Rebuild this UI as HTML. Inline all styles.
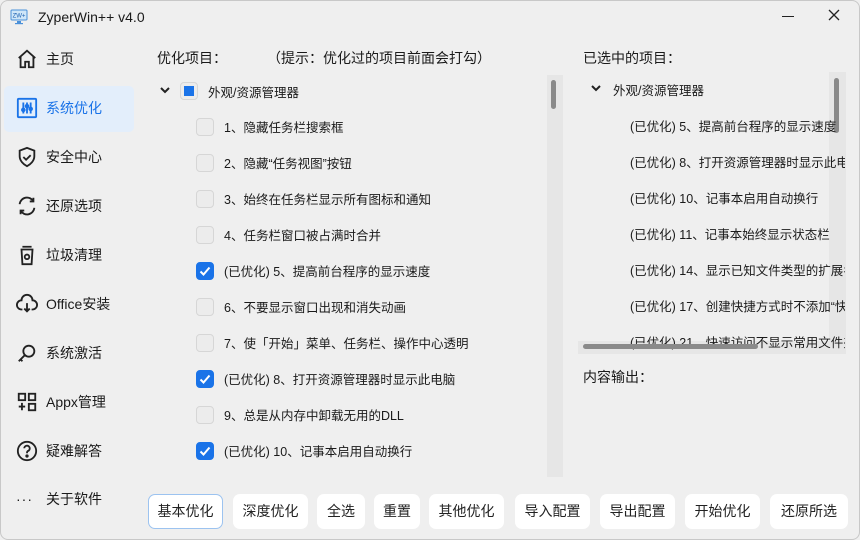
<!DOCTYPE html>
<html><head><meta charset="utf-8"><style>
*{margin:0;padding:0;box-sizing:border-box}
body{width:860px;height:540px;background:#efefef;font-family:"Liberation Sans","Noto Sans CJK SC",sans-serif;color:#1a1a1a;position:relative;overflow:hidden;font-size:13px}
.a{position:absolute;white-space:nowrap}
.nav{position:absolute;left:16px;font-size:14px;display:flex;align-items:center}
.nav svg{width:22px;height:22px;margin-right:8px}
.sel{position:absolute;left:4px;top:86px;width:130px;height:46px;background:#e3eefb;border-radius:5px}
.cb{position:absolute;left:196px;width:18px;height:18px;border:1px solid #d6d6d6;border-radius:4px;background:#ececec}
.cb.on{background:#1a73e8;border-color:#1a73e8}
.it{position:absolute;left:224px;font-size:12.5px}
.rt{position:absolute;left:630px;font-size:12.5px;white-space:nowrap;width:215px;overflow:hidden}
.btn{position:absolute;top:494px;height:35px;background:#fff;border-radius:7px;font-size:14px;text-align:center;line-height:35px;color:#222}
.frame{position:absolute;left:0;top:0;width:860px;height:540px;border:1px solid #c8c8c8;border-radius:8px;pointer-events:none}
</style></head><body>
<svg class="a" style="left:10px;top:9px" width="18" height="16" viewBox="0 0 18 16"><rect x="1" y="1" width="16" height="10" rx="1" fill="#cfe6f8" stroke="#4a90d9"/><text x="9" y="8.5" font-size="6" text-anchor="middle" fill="#1a5fb0" font-family="Liberation Sans">ZW+</text><rect x="7" y="12" width="4" height="2" fill="#4a90d9"/><rect x="5" y="14" width="8" height="1.2" fill="#4a90d9"/></svg>
<div class="a" style="left:38px;top:9px;font-size:14px">ZyperWin++ v4.0</div>
<div class="a" style="left:782px;top:16px;width:12px;height:1px;background:#222"></div>
<svg class="a" style="left:828px;top:9px" width="12" height="12"><path d="M1 1l10 10M11 1L1 11" stroke="#222" stroke-width="1.3"/></svg>
<div class="sel"></div>
<div class="nav" style="top:48px"><svg viewBox="0 0 24 24" fill="none" stroke="#222" stroke-width="2"><path d="M3 11L12 3l9 8M5 9v12h5v-6h4v6h5V9"/></svg>主页</div>
<div class="nav" style="top:97px;color:#1a73e8"><svg viewBox="0 0 24 24" fill="none" stroke="#1a73e8" stroke-width="2"><rect x="2" y="2" width="20" height="20" rx="1"/><path d="M8 6v12M12 6v12M16 6v12"/><circle cx="8" cy="14" r="1.5" fill="#1a73e8"/><circle cx="12" cy="10" r="1.5" fill="#1a73e8"/><circle cx="16" cy="13" r="1.5" fill="#1a73e8"/></svg>系统优化</div>
<div class="nav" style="top:146px"><svg viewBox="0 0 24 24" fill="none" stroke="#222" stroke-width="2"><path d="M12 2l8 3v6c0 5-4 9-8 11-4-2-8-6-8-11V5z"/><path d="M8 12l3 3 5-5"/></svg>安全中心</div>
<div class="nav" style="top:195px"><svg viewBox="0 0 24 24" fill="none" stroke="#222" stroke-width="2"><path d="M4 10a8 8 0 0 1 15-3M20 14a8 8 0 0 1-15 3"/><path d="M19 3v4h-4M5 21v-4h4"/></svg>还原选项</div>
<div class="nav" style="top:244px"><svg viewBox="0 0 24 24" fill="none" stroke="#222" stroke-width="2"><path d="M5 6h14M7 3h10M6 6l1 16h10l1-16"/><circle cx="12" cy="14" r="2.5"/></svg>垃圾清理</div>
<div class="nav" style="top:293px"><svg viewBox="0 0 24 24" fill="none" stroke="#222" stroke-width="2"><path d="M7 18H6a5 5 0 0 1 0-10 6 6 0 0 1 12 0 5 5 0 0 1 0 10h-1"/><path d="M12 11v9M9 17l3 3 3-3"/></svg>Office安装</div>
<div class="nav" style="top:342px"><svg viewBox="0 0 24 24" fill="none" stroke="#222" stroke-width="2"><circle cx="14" cy="10" r="6"/><path d="M10 14l-7 7M5 19l2 2"/></svg>系统激活</div>
<div class="nav" style="top:391px"><svg viewBox="0 0 24 24" fill="none" stroke="#222" stroke-width="2"><rect x="3" y="3" width="7" height="7"/><rect x="14" y="3" width="7" height="7"/><rect x="14" y="14" width="7" height="7"/><path d="M6.5 13v8M3 17h7"/></svg>Appx管理</div>
<div class="nav" style="top:440px"><svg viewBox="0 0 24 24" fill="none" stroke="#222" stroke-width="2"><circle cx="12" cy="12" r="10"/><path d="M9 9a3 3 0 1 1 4 3c-1 .5-1 1-1 2.5"/><circle cx="12" cy="17.5" r=".8" fill="#222"/></svg>疑难解答</div>
<div class="nav" style="top:489px"><span style="width:22px;margin-right:8px;letter-spacing:1px">···</span>关于软件</div>

<div class="a" style="left:157px;top:48px;font-size:14px">优化项目：</div>
<div class="a" style="left:267px;top:48px;font-size:14px">（提示：优化过的项目前面会打勾）</div>
<svg class="a" style="left:160px;top:87px" width="10" height="7"><path d="M1 1l4 4 4-4" stroke="#222" stroke-width="2" fill="none"/></svg>
<div class="a" style="left:180px;top:82px;width:18px;height:18px;border:1px solid #d6d6d6;border-radius:4px;background:#ececec"><div style="margin:3px;width:10px;height:10px;background:#1a73e8"></div></div>
<div class="a" style="left:208px;top:82px;font-size:12.5px">外观/资源管理器</div>
<div class="cb" style="top:118px"></div><div class="it" style="top:117px">1、隐藏任务栏搜索框</div>
<div class="cb" style="top:154px"></div><div class="it" style="top:153px">2、隐藏“任务视图”按钮</div>
<div class="cb" style="top:190px"></div><div class="it" style="top:189px">3、始终在任务栏显示所有图标和通知</div>
<div class="cb" style="top:226px"></div><div class="it" style="top:225px">4、任务栏窗口被占满时合并</div>
<div class="cb on" style="top:262px"><svg width="16" height="16"><path d="M3.5 8.5l3 3 6-7" stroke="#fff" stroke-width="2" fill="none"/></svg></div><div class="it" style="top:261px">(已优化) 5、提高前台程序的显示速度</div>
<div class="cb" style="top:298px"></div><div class="it" style="top:297px">6、不要显示窗口出现和消失动画</div>
<div class="cb" style="top:334px"></div><div class="it" style="top:333px">7、使「开始」菜单、任务栏、操作中心透明</div>
<div class="cb on" style="top:370px"><svg width="16" height="16"><path d="M3.5 8.5l3 3 6-7" stroke="#fff" stroke-width="2" fill="none"/></svg></div><div class="it" style="top:369px">(已优化) 8、打开资源管理器时显示此电脑</div>
<div class="cb" style="top:406px"></div><div class="it" style="top:405px">9、总是从内存中卸载无用的DLL</div>
<div class="cb on" style="top:442px"><svg width="16" height="16"><path d="M3.5 8.5l3 3 6-7" stroke="#fff" stroke-width="2" fill="none"/></svg></div><div class="it" style="top:441px">(已优化) 10、记事本启用自动换行</div>
<div class="a" style="left:547px;top:75px;width:16px;height:402px;background:#e6e6e6"></div>
<div class="a" style="left:551px;top:80px;width:5px;height:29px;background:#8a8a8a;border-radius:3px"></div>

<div class="a" style="left:583px;top:48px;font-size:14px">已选中的项目：</div>
<div class="a" style="left:829px;top:72px;width:17px;height:270px;background:#e6e6e6"></div>
<div class="a" style="left:834px;top:78px;width:5px;height:55px;background:#8a8a8a;border-radius:3px"></div>
<div class="a" style="left:578px;top:341px;width:268px;height:13px;background:#e6e6e6"></div>
<svg class="a" style="left:591px;top:85px" width="10" height="7"><path d="M1 1l4 4 4-4" stroke="#222" stroke-width="2" fill="none"/></svg>
<div class="a" style="left:613px;top:80px;font-size:12.5px">外观/资源管理器</div>
<div class="rt" style="top:116px">(已优化) 5、提高前台程序的显示速度</div>
<div class="rt" style="top:152px">(已优化) 8、打开资源管理器时显示此电脑</div>
<div class="rt" style="top:188px">(已优化) 10、记事本启用自动换行</div>
<div class="rt" style="top:224px">(已优化) 11、记事本始终显示状态栏</div>
<div class="rt" style="top:260px">(已优化) 14、显示已知文件类型的扩展名</div>
<div class="rt" style="top:296px">(已优化) 17、创建快捷方式时不添加“快捷方式”</div>
<div class="rt" style="top:332px">(已优化) 21、快速访问不显示常用文件夹</div>
<div class="a" style="left:583px;top:344px;width:175px;height:5px;background:#8a8a8a;border-radius:3px"></div>
<div class="a" style="left:583px;top:367px;font-size:14px">内容输出：</div>

<div class="btn" style="left:148px;width:75px;border:1px solid #9cc3f0;line-height:33px">基本优化</div>
<div class="btn" style="left:233px;width:75px">深度优化</div>
<div class="btn" style="left:317px;width:48px">全选</div>
<div class="btn" style="left:374px;width:46px">重置</div>
<div class="btn" style="left:429px;width:75px">其他优化</div>
<div class="btn" style="left:515px;width:75px">导入配置</div>
<div class="btn" style="left:600px;width:75px">导出配置</div>
<div class="btn" style="left:685px;width:75px">开始优化</div>
<div class="btn" style="left:770px;width:78px">还原所选</div>
<div class="frame"></div>
</body></html>
